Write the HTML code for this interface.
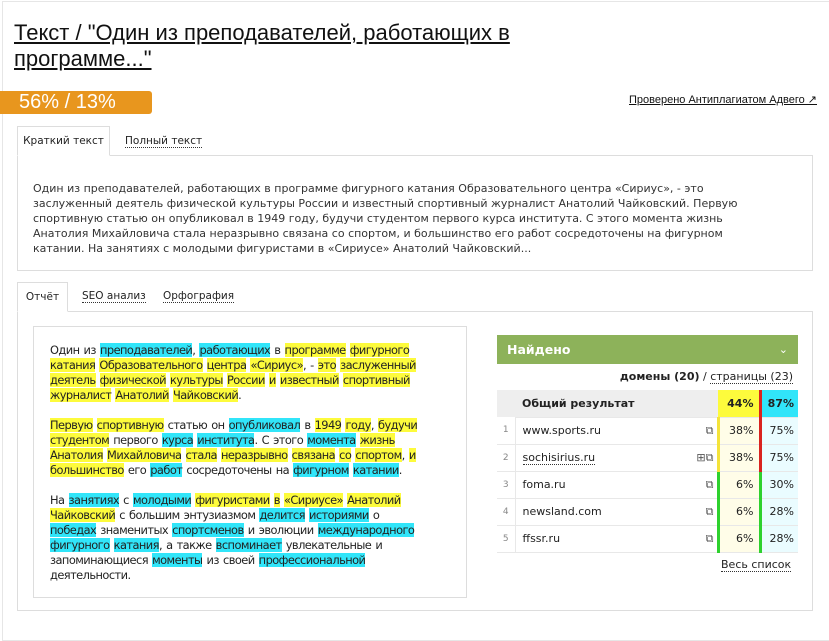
<!DOCTYPE html>
<html><head><meta charset="utf-8"><style>
*{box-sizing:border-box;margin:0;padding:0}
body{width:829px;height:619px;overflow:hidden;background:#fff;font-family:"DejaVu Sans","Liberation Sans",sans-serif;color:#222;position:relative}
.frame{position:absolute;left:2px;top:1px;width:840px;height:640px;border:1px solid #e6e6e6}
.title{position:absolute;left:14px;top:20px;font-family:"Liberation Sans",sans-serif;font-size:22px;line-height:26px;color:#111;text-decoration:underline;letter-spacing:0px;width:530px}
.badge{position:absolute;left:0;top:91px;width:152px;height:23px;background:#e8961e;color:#fff;font-family:"Liberation Sans",sans-serif;font-size:20px;line-height:23px;padding-left:19px;border-radius:0 3px 3px 0}
.chk{position:absolute;right:12px;top:93px;font-family:"Liberation Sans",sans-serif;font-size:11px;color:#111;text-decoration:underline}
.tab{position:absolute;font-size:10.5px;color:#222;line-height:14px}
.tab.act{border:1px solid #ddd;border-bottom:1px solid #fff;background:#fff;z-index:2;padding:7px 0;text-align:center}
.dot{border-bottom:1px dotted #333}
.box{position:absolute;border:1px solid #ddd;background:#fff}
.p1{position:absolute;left:15px;top:25px;width:770px;font-size:11px;line-height:15px;color:#333;white-space:nowrap}
.txt{position:absolute;left:16px;top:16px;width:375px;font-size:11.4px;letter-spacing:-0.55px;word-spacing:1px;line-height:15px;color:#222}
.txt p{margin-bottom:15px}
.y{background:#fdfb3c}.c{background:#31e5f9}
.green{position:absolute;left:497px;top:335px;width:301px;height:29px;background:#8db25a;color:#fff;font-weight:bold;font-size:12.5px;line-height:29px;padding-left:10px}
.green span{position:absolute;right:10px;top:0;font-weight:normal;font-size:11px}
.dom{position:absolute;right:36px;top:370px;font-size:11px;color:#222}
table{position:absolute;left:497px;top:390px;width:301px;border-collapse:collapse;font-size:11px}
td{height:27px;border-bottom:1px solid #e8e8e8;padding:0}
tr.h td{background:#eee;font-weight:bold;height:27px}
.n{width:18px;color:#888;font-size:9px;text-align:center;border-right:1px solid #e8e8e8}
.nm{padding-left:7px}
.ic{width:20px;text-align:right;padding-right:3px;color:#555}
.yc{width:42px;text-align:right;padding-right:5px;background:#fffde8}
.cc{width:38px;text-align:right;padding-right:4px;background:#eafcff}
tr.h .yc{background:#fdfb3c}tr.h .cc{background:#31e5f9}
.by{border-left:3px solid #f4e33a}.bg{border-left:3px solid #2ed12e}.br{border-left:3px solid #d9231f}
.all{position:absolute;left:721px;top:558px;font-size:11px;color:#222}
</style></head><body>
<div class="frame"></div>
<div class="title">Текст / "Один из преподавателей, работающих в программе..."</div>
<div class="badge">56% / 13%</div>
<div class="chk">Проверено Антиплагиатом Адвего ↗</div>
<div class="tab act" style="left:17px;top:126px;width:93px;height:30px">Краткий текст</div>
<div class="tab" style="left:125px;top:134px"><span class="dot">Полный текст</span></div>
<div class="box" style="left:17px;top:155px;width:796px;height:116px">
<div class="p1">Один из преподавателей, работающих в программе фигурного катания Образовательного центра «Сириус», - это<br>заслуженный деятель физической культуры России и известный спортивный журналист Анатолий Чайковский. Первую<br>спортивную статью он опубликовал в 1949 году, будучи студентом первого курса института. С этого момента жизнь<br>Анатолия Михайловича стала неразрывно связана со спортом, и большинство его работ сосредоточены на фигурном<br>катании. На занятиях с молодыми фигуристами в «Сириусе» Анатолий Чайковский...</div>
</div>
<div class="tab act" style="left:17px;top:282px;width:51px;height:30px">Отчёт</div>
<div class="tab" style="left:82px;top:289px"><span class="dot">SEO анализ</span></div>
<div class="tab" style="left:163px;top:289px"><span class="dot">Орфография</span></div>
<div class="box" style="left:17px;top:311px;width:796px;height:300px">
<div class="box" style="left:15px;top:14px;width:434px;height:272px">
<div class="txt">
<p>Один из <span class="c">преподавателей</span>, <span class="c">работающих</span> в <span class="y">программе</span> <span class="y">фигурного</span> <span class="y">катания</span> <span class="y">Образовательного</span> <span class="y">центра</span> <span class="y">«Сириус»</span>, - <span class="y">это</span> <span class="y">заслуженный</span> <span class="y">деятель</span> <span class="y">физической</span> <span class="y">культуры</span> <span class="y">России</span> <span class="y">и</span> <span class="y">известный</span> <span class="y">спортивный</span> <span class="y">журналист</span> <span class="y">Анатолий</span> <span class="y">Чайковский</span>.</p>
<p><span class="y">Первую</span> <span class="y">спортивную</span> статью он <span class="c">опубликовал</span> в <span class="y">1949</span> <span class="y">году</span>, <span class="y">будучи</span> <span class="y">студентом</span> первого <span class="c">курса</span> <span class="c">института</span>. С этого <span class="c">момента</span> <span class="y">жизнь</span> <span class="y">Анатолия</span> <span class="y">Михайловича</span> <span class="y">стала</span> <span class="y">неразрывно</span> <span class="y">связана</span> <span class="y">со</span> <span class="y">спортом</span>, <span class="y">и</span> <span class="y">большинство</span> его <span class="c">работ</span> сосредоточены на <span class="c">фигурном</span> <span class="c">катании</span>.</p>
<p>На <span class="c">занятиях</span> с <span class="c">молодыми</span> <span class="y">фигуристами</span> <span class="y">в</span> <span class="y">«Сириусе»</span> <span class="y">Анатолий</span> <span class="y">Чайковский</span> с большим энтузиазмом <span class="c">делится</span> <span class="c">историями</span> о<br><span class="c">победах</span> знаменитых <span class="c">спортсменов</span> и эволюции <span class="c">международного</span><br><span class="c">фигурного</span> <span class="c">катания</span>, а также <span class="c">вспоминает</span> увлекательные и запоминающиеся <span class="c">моменты</span> из своей <span class="c">профессиональной</span> деятельности.</p>
</div></div>
</div>
<div class="green">Найдено<span>⌄</span></div>
<div class="dom"><b>домены (20)</b> / <span class="dot">страницы (23)</span></div>
<table>
<tr class="h"><td class="n" style="border:none"></td><td class="nm">Общий результат</td><td class="ic"></td><td class="yc">44%</td><td class="cc br">87%</td></tr>
<tr><td class="n">1</td><td class="nm">www.sports.ru</td><td class="ic">⧉</td><td class="yc by">38%</td><td class="cc br">75%</td></tr>
<tr><td class="n">2</td><td class="nm"><span class="dot">sochisirius.ru</span></td><td class="ic">⊞⧉</td><td class="yc by">38%</td><td class="cc br">75%</td></tr>
<tr><td class="n">3</td><td class="nm">foma.ru</td><td class="ic">⧉</td><td class="yc bg">6%</td><td class="cc bg">30%</td></tr>
<tr><td class="n">4</td><td class="nm">newsland.com</td><td class="ic">⧉</td><td class="yc bg">6%</td><td class="cc bg">28%</td></tr>
<tr><td class="n">5</td><td class="nm">ffssr.ru</td><td class="ic">⧉</td><td class="yc bg">6%</td><td class="cc bg">28%</td></tr>
</table>
<div class="all"><span class="dot">Весь список</span></div>
</body></html>
